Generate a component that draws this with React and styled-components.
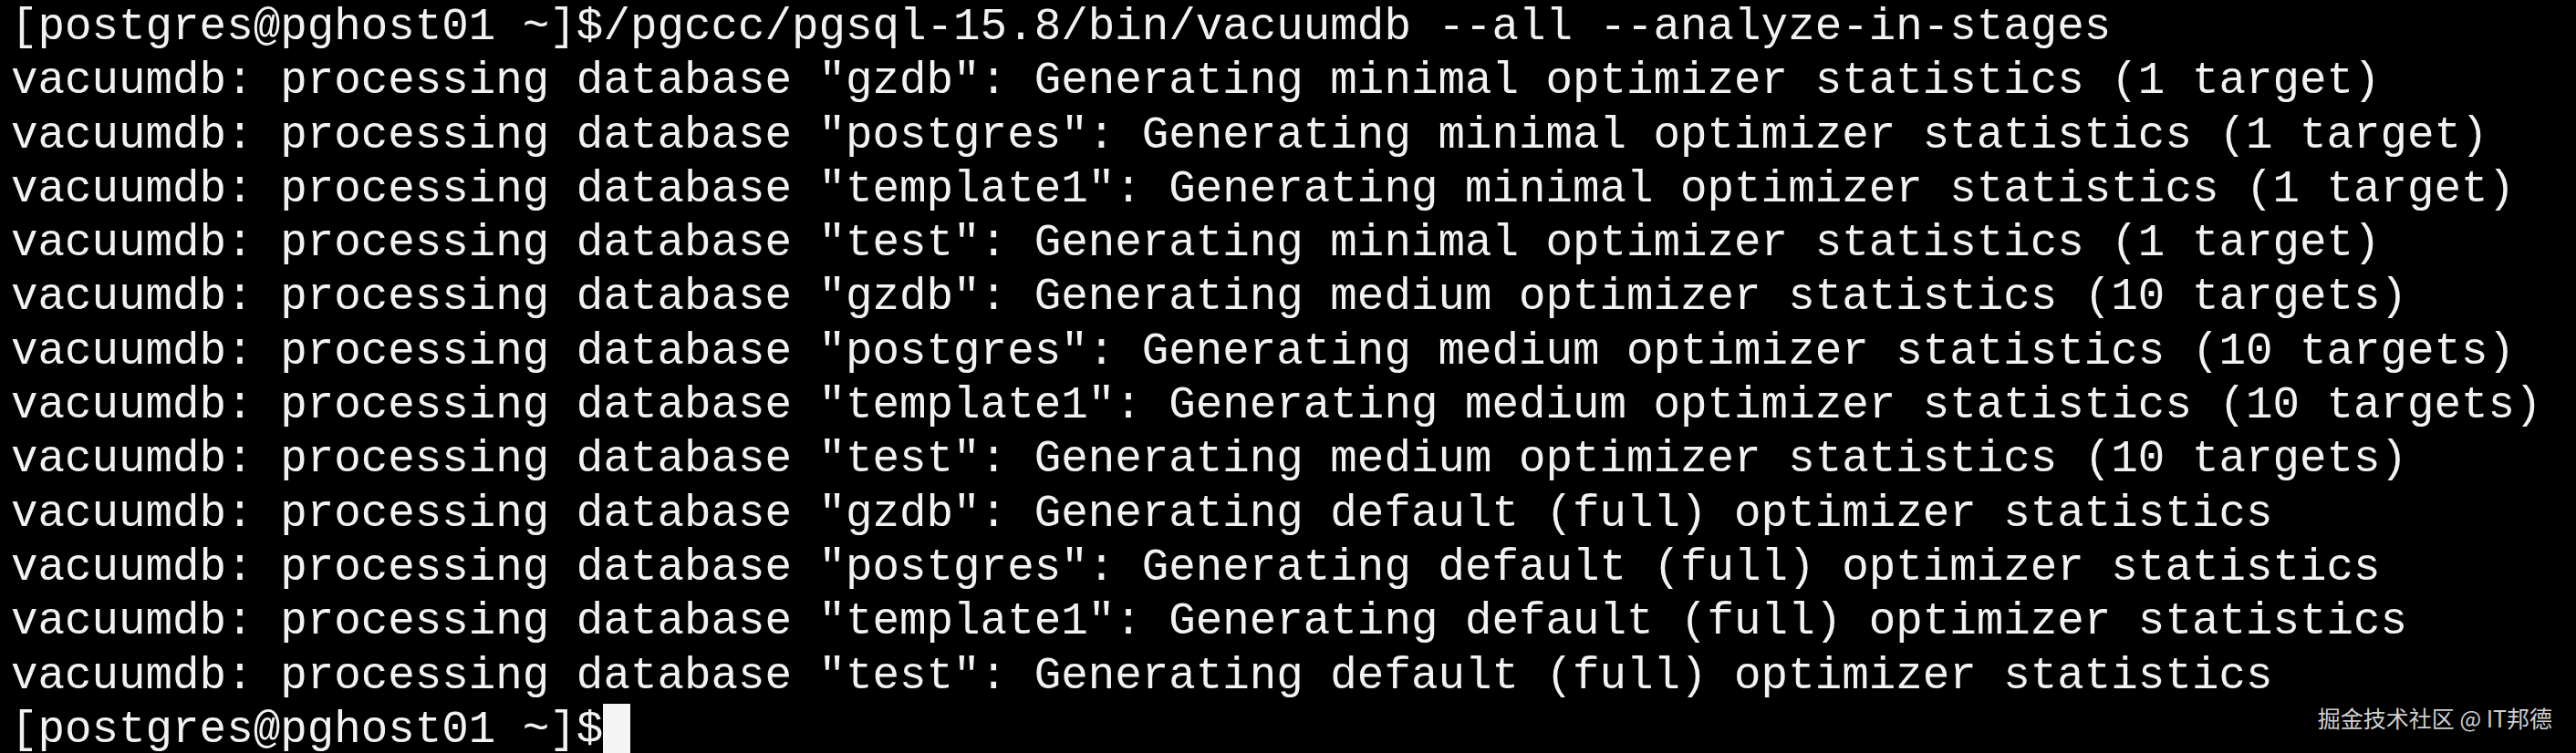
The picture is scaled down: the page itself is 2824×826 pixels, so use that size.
import React from 'react';
import styled, { createGlobalStyle } from 'styled-components';

const GlobalStyle = createGlobalStyle`
  html, body {
    margin: 0;
    padding: 0;
    background: #000;
  }
`;

const Terminal = styled.div`
  position: relative;
  width: 2824px;
  height: 826px;
  overflow: hidden;
  background: #000;
  padding: 1px 0 0 12px;
  box-sizing: border-box;
  font-family: 'Courier New', 'Nimbus Mono PS', 'Nimbus Mono L', 'FreeMono', 'Liberation Mono', monospace;
  font-size: 49.2px;
  line-height: 59.3px;
  color: #f2f2f2;
`;

const Line = styled.div`
  white-space: pre;
  height: 59.3px;
`;

const Cursor = styled.span`
  display: inline-block;
  width: 29.5px;
  height: 60px;
  vertical-align: top;
  background: #f4f4f4;
`;

const Watermark = styled.div`
  position: absolute;
  right: 26px;
  bottom: 24px;
  font-family: 'Noto Sans CJK SC', 'Noto Sans', sans-serif;
  font-size: 25px;
  line-height: 30px;
  color: #cfcfcf;
  white-space: pre;
`;

const prefix = 'vacuumdb: processing database ';
const stages = [
  'Generating minimal optimizer statistics (1 target)',
  'Generating medium optimizer statistics (10 targets)',
  'Generating default (full) optimizer statistics',
];
const dbs = ['gzdb', 'postgres', 'template1', 'test'];

const lines = [
  '[postgres@pghost01 ~]$/pgccc/pgsql-15.8/bin/vacuumdb --all --analyze-in-stages',
];
stages.forEach((stage) => {
  dbs.forEach((db) => {
    lines.push(`${prefix}"${db}": ${stage}`);
  });
});

export default function App() {
  return (
    <>
      <GlobalStyle />
      <Terminal>
        {lines.map((text, index) => (
          <Line key={index}>{text}</Line>
        ))}
        <Line>
          [postgres@pghost01 ~]$<Cursor />
        </Line>
        <Watermark>掘金技术社区 @ IT邦德</Watermark>
      </Terminal>
    </>
  );
}
